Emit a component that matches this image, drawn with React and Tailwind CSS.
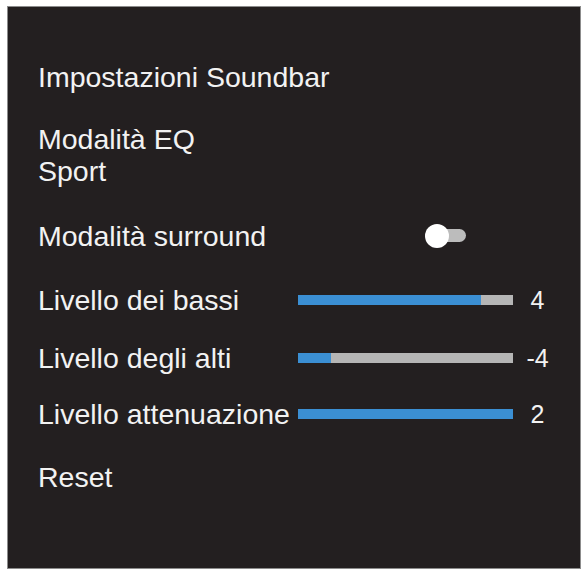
const levels = [
  { label: 'Livello dei bassi', fill: 183, value: '4', gap: 'mt-[32px]' },
  { label: 'Livello degli alti', fill: 33, value: '-4', gap: 'mt-[26px]' },
  { label: 'Livello attenuazione', fill: 215, value: '2', gap: 'mt-[24px]' },
]

function Toggle() {
  return (
    <div className="relative ml-[127px] h-[24px] w-[41px]">
      <div className="absolute left-[5px] top-[5px] h-[13px] w-[36px] rounded-full bg-[#bcbcbc]" />
      <div className="absolute left-0 top-0 h-[24px] w-[24px] rounded-full bg-white" />
    </div>
  )
}

function LevelBar({ fill }) {
  return (
    <div className="h-[10px] w-[215px] bg-[#b5b5b5]">
      <div className="h-full bg-[#3b8fd3]" style={{ width: fill }} />
    </div>
  )
}

export default function App() {
  return (
    <div className="h-[571px] w-[585px] bg-white pl-[7px] pt-[6px] font-['Liberation_Sans',Arial,sans-serif]">
      <div className="flex h-[563px] w-[574px] flex-col border border-[#8c8c8c] bg-[#231f20] pl-[30px] pt-[54px] text-[28.5px] leading-[32px] text-[#f2f2f2]">
        <div>Impostazioni Soundbar</div>

        <div className="mt-[30px]">
          <div>Modalità EQ</div>
          <div>Sport</div>
        </div>

        <div className="mt-[33px] flex items-center">
          <div className="w-[260px]">Modalità surround</div>
          <Toggle />
        </div>

        {levels.map((l) => (
          <div key={l.label} className={`${l.gap} flex items-center`}>
            <div className="w-[260px] whitespace-nowrap">{l.label}</div>
            <LevelBar fill={l.fill} />
            <div className="w-[49px] text-center text-[25px]">{l.value}</div>
          </div>
        ))}

        <div className="mt-[31px]">Reset</div>
      </div>
    </div>
  )
}
